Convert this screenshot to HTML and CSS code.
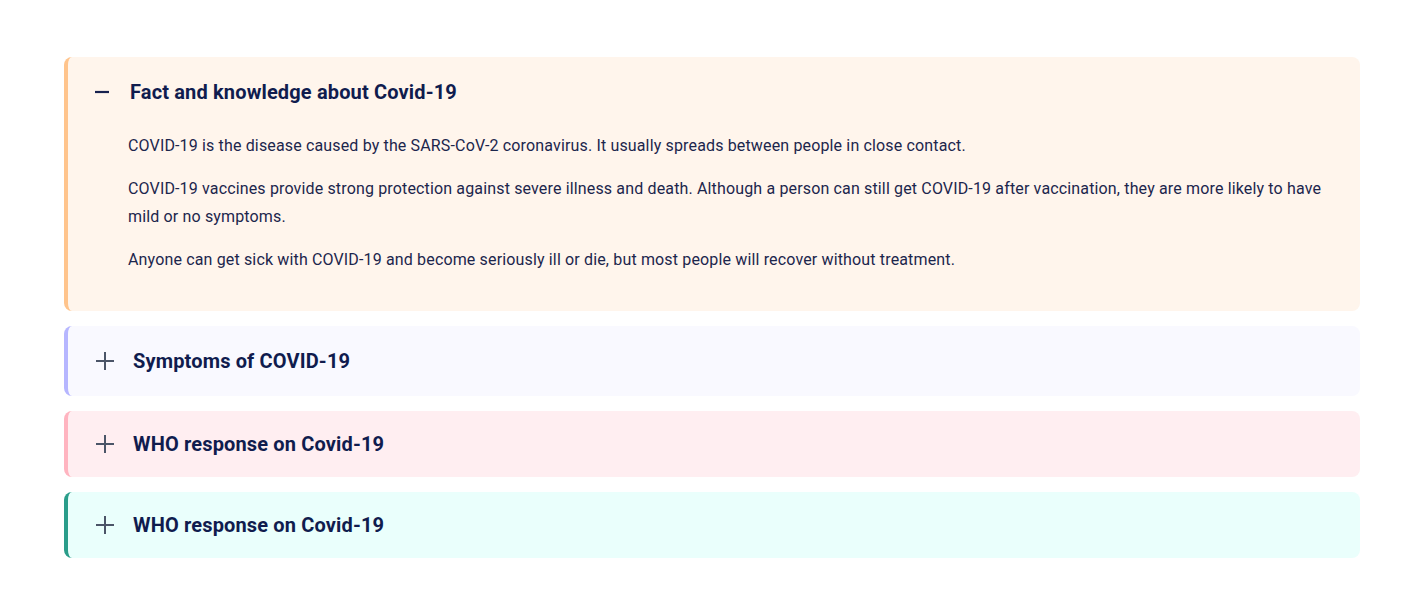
FILE: index.html
```html
<!DOCTYPE html>
<html lang="en">
<head>
<meta charset="utf-8">
<title>Covid-19 FAQ</title>
<link rel="stylesheet" href="styles.css">
</head>
<body>
<div class="accordion">
  <section class="item item--orange open">
    <div class="item-head">
      <svg class="icon icon-minus" width="17" height="20" viewBox="0 0 17 20"><path d="M0 10 H14" stroke="#17214f" stroke-width="2.2"/></svg>
      <h2 class="item-title">Fact and knowledge about Covid-19</h2>
    </div>
    <div class="item-body">
      <p>COVID-19 is the disease caused by the SARS-CoV-2 coronavirus. It usually spreads between people in close contact.</p>
      <p>COVID-19 vaccines provide strong protection against severe illness and death. Although a person can still get COVID-19 after vaccination, they are more likely to have mild or no symptoms.</p>
      <p>Anyone can get sick with COVID-19 and become seriously ill or die, but most people will recover without treatment.</p>
    </div>
  </section>
  <section class="item item--purple">
    <div class="item-head">
      <svg class="icon icon-plus" width="20" height="20" viewBox="0 0 20 20"><path d="M10 1 V19 M1 10 H19" stroke="#4b5568" stroke-width="2"/></svg>
      <h2 class="item-title">Symptoms of COVID-19</h2>
    </div>
  </section>
  <section class="item item--pink">
    <div class="item-head item-head--short">
      <svg class="icon icon-plus" width="20" height="20" viewBox="0 0 20 20"><path d="M10 1 V19 M1 10 H19" stroke="#4b5568" stroke-width="2"/></svg>
      <h2 class="item-title">WHO response on Covid-19</h2>
    </div>
  </section>
  <section class="item item--teal">
    <div class="item-head item-head--short">
      <svg class="icon icon-plus" width="20" height="20" viewBox="0 0 20 20"><path d="M10 1 V19 M1 10 H19" stroke="#4b5568" stroke-width="2"/></svg>
      <h2 class="item-title">WHO response on Covid-19</h2>
    </div>
  </section>
</div>
</body>
</html>
```

FILE: styles.css
```css
* { box-sizing: border-box; }

html, body {
  margin: 0;
  padding: 0;
  background: #ffffff;
}

body {
  font-family: Roboto, "Liberation Sans", Arial, sans-serif;
  color: #1c264c;
}

.accordion {
  width: 1296px;
  margin: 57px 0 0 64px;
  display: flex;
  flex-direction: column;
  gap: 15px;
}

.item {
  border-radius: 8px;
  border-left: 4px solid transparent;
}

.item--orange { background: #fff5ec; border-left-color: #ffc48c; }
.item--purple { background: #f9f9ff; border-left-color: #b6b6ff; }
.item--pink   { background: #ffeef1; border-left-color: #ffb4c0; }
.item--teal   { background: #eafffc; border-left-color: #2a9d8a; }

.item-head {
  height: 70px;
  display: flex;
  align-items: center;
  padding-left: 27px;
  gap: 18px;
}

.item-head--short {
  height: 66px;
}

.icon {
  flex: none;
  display: block;
}

.item-title {
  margin: 0;
  font-size: 20px;
  font-weight: 700;
  color: #101c4e;
  line-height: 24px;
  letter-spacing: 0.15px;
}

.item-body {
  padding: 5px 36px 37px 60px;
}

.item-body p {
  margin: 0 0 15px;
  font-size: 16px;
  line-height: 28px;
  letter-spacing: 0.15px;
  color: #1c264c;
}

.item-body p:last-child {
  margin-bottom: 0;
}
```
